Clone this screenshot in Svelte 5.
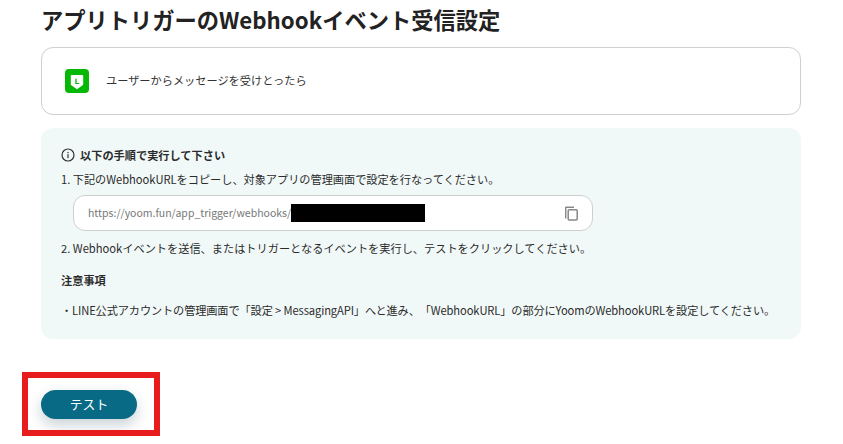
<script lang="ts">
	const steps = {
		first: '1. 下記のWebhookURLをコピーし、対象アプリの管理画面で設定を行なってください。',
		second: '2. Webhookイベントを送信、またはトリガーとなるイベントを実行し、テストをクリックしてください。'
	};
</script>

<main class="page">
	<h1 class="title">アプリトリガーのWebhookイベント受信設定</h1>

	<section class="event">
		<svg class="event__logo" width="24" height="24" viewBox="0 0 24 24" aria-hidden="true">
			<rect width="24" height="24" rx="4" fill="#06b806" />
			<path d="M5.8 6.8Q5.8 6 6.6 6h10.8q.8 0 .8.8v8.4c0 .6-.3 1-.9 1.4L12 20.3l-5.300-3.700c-.6-.4-.9-.8-.9-1.400z" fill="#fff" />
			<path d="M10.300 9.700h1.300v4.200h2.700v1.100h-4z" fill="#06b806" />
		</svg>
		<span class="event__label">ユーザーからメッセージを受けとったら</span>
	</section>

	<section class="guide">
		<div class="guide__head">
			<svg width="14" height="14" viewBox="0 0 14 14" aria-hidden="true">
				<circle cx="7" cy="7" r="6" fill="none" stroke="#333" stroke-width="1.2" />
				<rect x="6.4" y="6.2" width="1.2" height="4" fill="#333" />
				<rect x="6.4" y="3.9" width="1.2" height="1.3" fill="#333" />
			</svg>
			<strong>以下の手順で実行して下さい</strong>
		</div>
		<p class="guide__step guide__step--first">{steps.first}</p>
		<div class="url">
			<span class="url__text">https://yoom.fun/app_trigger/webhooks/</span>
			<span class="url__mask"></span>
			<svg class="url__copy" width="18" height="18" viewBox="0 0 18 18" aria-hidden="true">
				<path d="M3 4v10.500h1.400V2.900H3zM3 2.900V4h9V2.600H4.200C3.500 2.600 3 3.100 3 3.800z" fill="#888" />
				<rect x="6.200" y="5.700" width="9" height="10.400" rx="1" fill="none" stroke="#888" stroke-width="1.500" />
			</svg>
		</div>
		<p class="guide__step">{steps.second}</p>
		<h2 class="guide__note">注意事項</h2>
		<p class="guide__line">・LINE公式アカウントの管理画面で「設定 &gt; MessagingAPI」へと進み、「WebhookURL」の部分にYoomのWebhookURLを設定してください。</p>
	</section>

	<button class="test" type="button">テスト</button>
	<div class="highlight"></div>
</main>

<style>
	:global(body) {
		margin: 0;
		background: #fff;
	}

	.page {
		position: relative;
		box-sizing: border-box;
		width: 843px;
		height: 444px;
		overflow: hidden;
		padding: 5px 42px 0 41px;
		font-family: 'Noto Sans CJK JP', sans-serif;
		color: #2b2b2b;
		text-spacing-trim: space-all;
	}

	.title {
		margin: 0;
		font-size: 22.25px;
		line-height: 28px;
		font-weight: 700;
		color: #222;
	}

	.event {
		display: flex;
		align-items: center;
		gap: 17px;
		height: 68px;
		box-sizing: border-box;
		margin-top: 14px;
		padding-left: 23px;
		border: 1px solid #cfcfcf;
		border-radius: 12px;
	}

	.event__logo {
		flex: none;
	}

	.event__label {
		margin-bottom: 2px;
		font-size: 11.2px;
		color: #333;
	}

	.guide {
		box-sizing: border-box;
		height: 211px;
		margin-top: 13px;
		padding: 19px 20px 0;
		background: #f1f9f8;
		border-radius: 12px;
		font-size: 11.2px;
		line-height: 16px;
	}

	.guide__head {
		display: flex;
		align-items: center;
		gap: 5px;
		font-size: 11.2px;
	}

	.guide__step {
		margin: 4px 0 0;
	}

	.guide__step--first {
		margin-top: 8px;
		letter-spacing: -0.03px;
	}

	.url {
		display: flex;
		align-items: center;
		box-sizing: border-box;
		width: 520px;
		height: 36px;
		margin: 8px 0 9px 12px;
		padding: 0 12px 0 14px;
		background: #fff;
		border: 1px solid #cfcfcf;
		border-radius: 12px;
	}

	.url__text {
		color: #777;
		font-size: 10.5px;
	}

	.url__mask {
		width: 134px;
		height: 18px;
		background: #000;
	}

	.url__copy {
		margin-left: auto;
	}

	.guide__note {
		margin: 16px 0 0;
		font-size: 11.2px;
		line-height: 16px;
		font-weight: 700;
	}

	.guide__line {
		margin: 14px 0 0;
		white-space: nowrap;
		letter-spacing: -0.12px;
	}

	.test {
		display: block;
		width: 96px;
		height: 29px;
		margin-top: 51px;
		padding: 0 0 2px;
		border: 0;
		border-radius: 15px;
		background: #086a84;
		color: #fff;
		font: 400 12.8px 'Noto Sans CJK JP', sans-serif;
		box-shadow: 0 6px 14px rgba(8, 50, 70, 0.22);
	}

	.highlight {
		position: absolute;
		left: 22px;
		top: 372px;
		width: 126px;
		height: 52px;
		border: 6px solid #e81c1c;
	}
</style>
